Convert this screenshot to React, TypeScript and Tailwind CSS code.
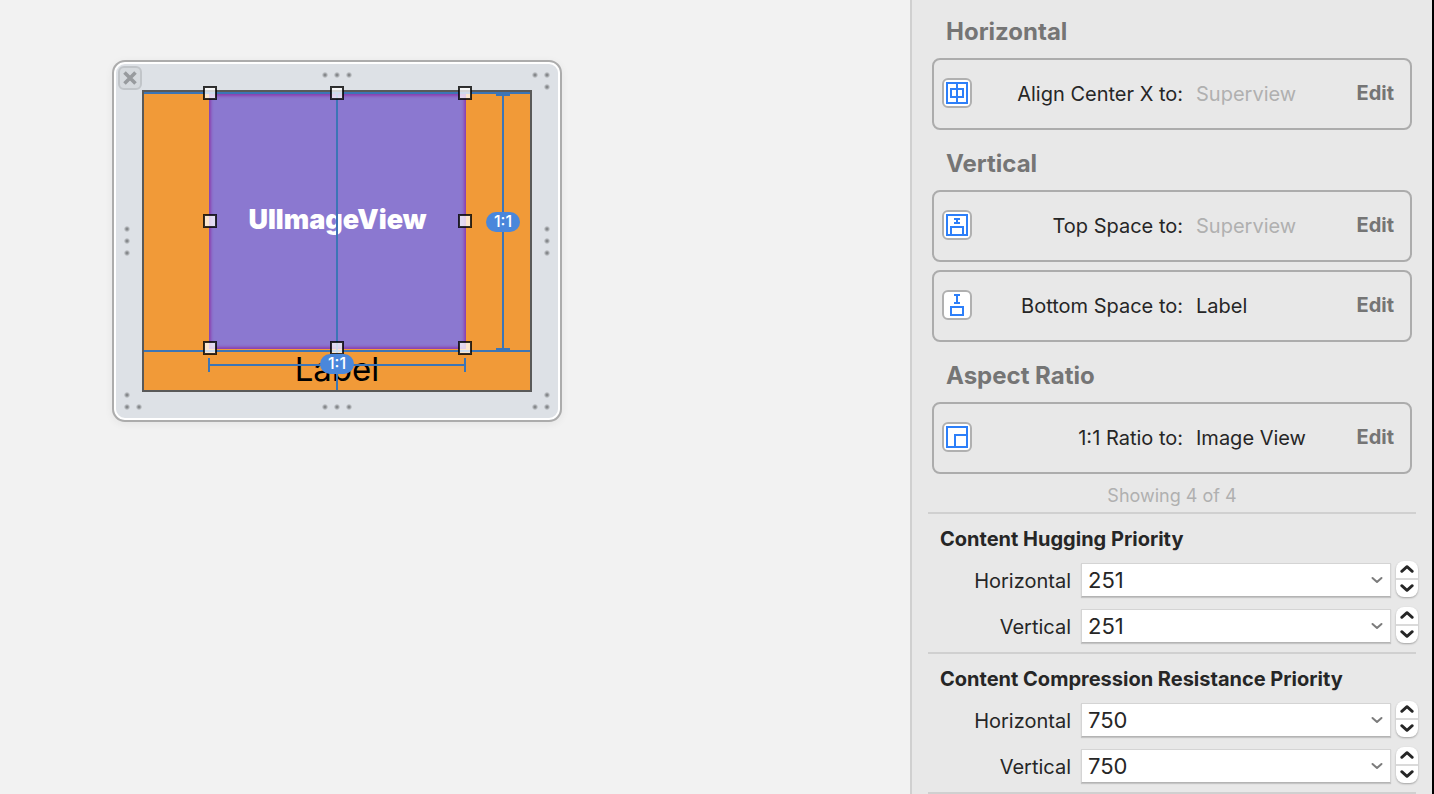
import React from "react";

const BLUE = "#2d7ff9";
const GUIDE = "#3c75b6";

type IconKind = "center-x" | "top-space" | "bottom-space" | "ratio";

function ConstraintIcon({ kind }: { kind: IconKind }) {
  return (
    <svg width="30" height="30" viewBox="0 0 30 30" fill="none" stroke={BLUE} strokeWidth="2" aria-hidden="true">
      <rect x="1" y="1" width="28" height="28" rx="5" fill="#fff" stroke="#b0b0b0" />
      {kind !== "bottom-space" && <rect x="5" y="5" width="20" height="20" />}
      {kind === "center-x" && (
        <>
          <rect x="9" y="11" width="12" height="8" />
          <path d="M15 5v20" />
        </>
      )}
      {kind === "top-space" && (
        <>
          <path d="M12 9h6M12 13h6M15 9v4" />
          <rect x="9" y="17" width="12" height="8" />
        </>
      )}
      {kind === "bottom-space" && (
        <>
          <path d="M12 5h6M12 13h6M15 5v8" />
          <rect x="9" y="17" width="12" height="8" />
        </>
      )}
      {kind === "ratio" && <rect x="13" y="13" width="12" height="12" />}
    </svg>
  );
}

function ConstraintCard({
  icon,
  label,
  value,
  muted,
}: {
  icon: IconKind;
  label: string;
  value: string;
  muted?: boolean;
}) {
  return (
    <div className="flex h-[72px] items-center rounded-lg border-2 border-[#acacac] pr-4 pb-[2px] pl-2 text-xl">
      <ConstraintIcon kind={icon} />
      <div className="w-[211px] pt-[2px] text-right text-[#262626]">{label}</div>
      <div className={muted ? "ml-[13px] flex-1 pt-[2px] text-[#b0b0b0]" : "ml-[13px] flex-1 pt-[2px] text-[#262626]"}>{value}</div>
      <button className="font-bold text-[#757575]">Edit</button>
    </div>
  );
}

function GroupTitle({ children }: { children: React.ReactNode }) {
  return <h2 className="px-[14px] text-2xl font-bold text-[#757575]">{children}</h2>;
}

function Chevron({ up, size, color, stroke }: { up?: boolean; size: number; color: string; stroke: number }) {
  return (
    <svg width={size} height={size} viewBox="0 0 12 12" fill="none" stroke={color} strokeWidth={stroke} strokeLinecap="round" strokeLinejoin="round" aria-hidden="true">
      <path d={up ? "M1.500 8 6 4l4.500 4" : "M1.500 4 6 8l4.500-4"} />
    </svg>
  );
}

function PriorityRow({ id, label, value }: { id: string; label: string; value: string }) {
  return (
    <div className="flex h-9 items-end">
      <label htmlFor={id} className="flex h-[34px] w-[143px] items-center justify-end pt-[2px] text-xl text-[#262626]">
        {label}
      </label>
      <div className="ml-[10px] flex h-[34px] min-w-0 flex-1 border border-[#d4d4d4] border-b-[#b4b4b4] bg-white shadow-[0_1px_1px_rgba(0,0,0,0.15)]">
        <input id={id} defaultValue={value} className="min-w-0 flex-1 bg-transparent pl-[6px] text-[22px] text-[#262626] outline-none" />
        <button aria-label={`${label} presets`} className="flex w-[26px] items-center justify-center">
          <Chevron size={12} color="#7c7c7c" stroke={2} />
        </button>
      </div>
      <div className="mr-px ml-[5px] flex h-9 w-[22px] flex-col rounded-lg bg-white pb-px shadow-[0_1px_2px_rgba(0,0,0,0.3)]">
        <button aria-label={`Increase ${label}`} className="flex flex-1 items-center justify-center">
          <Chevron up size={14} color="#262626" stroke={2.4} />
        </button>
        <div className="h-[2px] bg-[#dadada]" />
        <button aria-label={`Decrease ${label}`} className="flex flex-1 items-center justify-center">
          <Chevron size={14} color="#262626" stroke={2.4} />
        </button>
      </div>
    </div>
  );
}

function PrioritySection({ id, title, value }: { id: string; title: string; value: string }) {
  return (
    <section className="ml-4 pb-[9px]">
      <div className="mr-4 h-[2px] bg-[#d0d0d0]" />
      <h3 className="mt-[13px] pl-3 text-xl leading-6 font-bold text-[#262626]">{title}</h3>
      <div className="mt-[10px] mr-[13px] flex flex-col gap-[10px]">
        <PriorityRow id={`${id}-h`} label="Horizontal" value={value} />
        <PriorityRow id={`${id}-v`} label="Vertical" value={value} />
      </div>
    </section>
  );
}

// grip dots around the edge of the floating view
const dots = [
  [213, 15], [225, 15], [237, 15],
  [423, 15], [435, 15], [435, 27],
  [15, 169], [15, 181], [15, 193],
  [435, 169], [435, 181], [435, 193],
  [15, 335], [15, 347], [27, 347],
  [213, 347], [225, 347], [237, 347],
  [435, 335], [423, 347], [435, 347],
];

const handles = [
  [91, 26], [218, 26], [346, 26],
  [91, 154], [346, 154],
  [91, 281], [218, 281], [346, 281],
];

function RatioBadge({ className }: { className: string }) {
  return (
    <span className={`absolute flex h-5 w-[34px] items-center justify-center rounded-full bg-[#4a87db] pb-[3px] text-base leading-4 font-medium text-white ${className}`}>
      1:1
    </span>
  );
}

function ViewCanvas() {
  return (
    <div className="relative h-[362px] w-[450px] rounded-[13px] border-2 border-[#acacac] bg-[#dde1e6] shadow-[inset_0_0_0_2px_#fff,0_2px_8px_rgba(0,0,0,0.06)]">
      <div className="absolute -inset-[2px]">
        <div className="absolute top-[30px] left-[30px] h-[302px] w-[390px] border-2 border-[#595959] bg-[#f19a38]" />
        <div className="absolute top-[34px] left-[97px] flex h-[255px] w-[257px] items-center justify-center bg-[#8b78d0] pb-[2px] text-[27px] font-black text-white shadow-[inset_0_0_3px_2px_#8b3fae]">
          UIImageView
        </div>
        <div className="absolute top-[289px] left-[30px] w-[390px] text-center text-[33px] leading-10 text-black">Label</div>

        <svg className="absolute inset-0" width="450" height="362" viewBox="0 0 450 362" fill="none" aria-hidden="true">
          <defs>
            <radialGradient id="grip">
              <stop offset="0.25" stopColor="#85888b" />
              <stop offset="1" stopColor="#85888b" stopOpacity="0" />
            </radialGradient>
          </defs>
          {dots.map(([x, y]) => (
            <circle key={`${x}-${y}`} cx={x} cy={y} r="3.200" fill="url(#grip)" />
          ))}
          <g stroke={GUIDE} strokeWidth="2">
            <path d="M32 33h386M32 291h386M225 32v298" />
            <path d="M391 34v256M384 35h14M384 289h14" />
            <path d="M97 305h256M97 298v14M353 298v14" />
          </g>
          {handles.map(([x, y]) => (
            <rect key={`${x}-${y}`} x={x + 1} y={y + 1} width="12" height="12" fill="#fff" fillOpacity="0.75" stroke="#000" strokeOpacity="0.8" strokeWidth="2" />
          ))}
        </svg>

        <RatioBadge className="top-[152px] left-[374px]" />
        <RatioBadge className="top-[294px] left-[208px]" />

        <button aria-label="Close" className="absolute top-[6px] left-[6px] flex h-6 w-6 items-center justify-center rounded-md border-2 border-[#c1c5c9] bg-[#d6dade]">
          <svg width="14" height="14" viewBox="0 0 14 14" stroke="#989b9e" strokeWidth="3.600" aria-hidden="true">
            <path d="M1.500 1.500l11 11M12.500 1.500l-11 11" />
          </svg>
        </button>
      </div>
    </div>
  );
}

export default function App() {
  return (
    <div className="flex min-h-screen bg-[#f2f2f2] font-['Inter','Liberation_Sans',sans-serif]">
      <main className="min-w-0 flex-1 pt-[60px] pl-28">
        <ViewCanvas />
      </main>

      <aside className="w-[524px] shrink-0 border-r-2 border-l-2 border-r-black border-l-[#d0d0d0] bg-[#e8e8e8]">
        <div className="flex flex-col px-5 pt-4">
          <GroupTitle>Horizontal</GroupTitle>
          <div className="mt-[10px] mb-[18px]">
            <ConstraintCard icon="center-x" label="Align Center X to:" value="Superview" muted />
          </div>
          <GroupTitle>Vertical</GroupTitle>
          <div className="mt-[10px] mb-[18px] flex flex-col gap-2">
            <ConstraintCard icon="top-space" label="Top Space to:" value="Superview" muted />
            <ConstraintCard icon="bottom-space" label="Bottom Space to:" value="Label" />
          </div>
          <GroupTitle>Aspect Ratio</GroupTitle>
          <div className="mt-[10px]">
            <ConstraintCard icon="ratio" label="1:1 Ratio to:" value="Image View" />
          </div>
          <p className="mt-[10px] mb-1 text-center text-lg leading-6 text-[#b0b0b0]">Showing 4 of 4</p>
        </div>
        <PrioritySection id="hugging" title="Content Hugging Priority" value="251" />
        <PrioritySection id="compression" title="Content Compression Resistance Priority" value="750" />
        <div className="mx-4 h-[2px] bg-[#d0d0d0]" />
      </aside>
    </div>
  );
}
